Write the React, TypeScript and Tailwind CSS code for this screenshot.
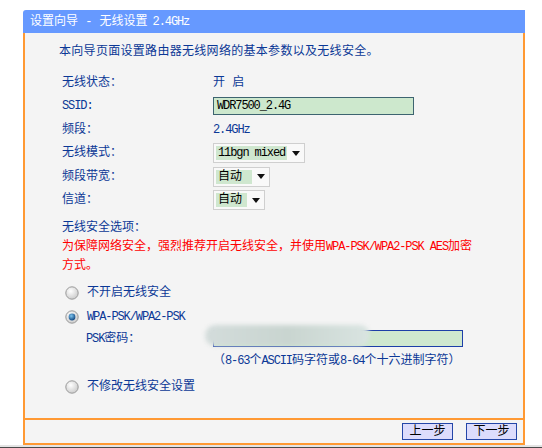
import React from "react";

const FONT = { fontFamily: '"Liberation Mono", "Noto Sans CJK SC", monospace' };

// latin runs: SimSun-like half-width, ~6px per glyph
function L({ children }: { children: React.ReactNode }) {
  return <span className="font-['Liberation_Mono'] text-[12px] tracking-[-1.1px]">{children}</span>;
}

function Radio({ checked }: { checked?: boolean }) {
  return (
    <svg width="14" height="14" viewBox="0 0 14 14" className="shrink-0">
      <defs>
        <radialGradient id="rg" cx="40%" cy="35%" r="70%">
          <stop offset="0%" stopColor="#ffffff" />
          <stop offset="100%" stopColor="#c9c9c9" />
        </radialGradient>
        <radialGradient id="rb" cx="40%" cy="35%" r="70%">
          <stop offset="0%" stopColor="#7fc6f0" />
          <stop offset="100%" stopColor="#0b3f7a" />
        </radialGradient>
      </defs>
      <circle cx="7" cy="7" r="6.2" fill="url(#rg)" stroke="#9a9a9a" strokeWidth="1" />
      {checked && <circle cx="7" cy="7" r="3.4" fill="url(#rb)" />}
    </svg>
  );
}

function Select({ text, width, hl }: { text: React.ReactNode; width: number; hl: number }) {
  return (
    <div
      className="flex h-[20px] items-center border border-[#cfcfcf] bg-[#f9f9f9] pl-[2px] text-black"
      style={{ width }}
    >
      <div className="flex h-[14px] items-center bg-[#cfe7cf] pl-[2px]" style={{ width: hl }}>
        {text}
      </div>
      <div className="flex flex-1 justify-center">
        <svg width="8" height="5" viewBox="0 0 8 5">
          <path d="M0 0 H8 L4 5 Z" fill="#111" />
        </svg>
      </div>
    </div>
  );
}

const rows: { label: React.ReactNode; value: React.ReactNode }[] = [
  { label: "无线状态：", value: <span>开 启</span> },
  {
    label: <L>SSID:</L>,
    value: (
      <div className="flex h-[18px] w-[201px] items-center border border-[#3d6470] bg-[#cde8cd] pl-[3px] text-black">
        <L>WDR7500_2.4G</L>
      </div>
    ),
  },
  { label: "频段：", value: <L>2.4GHz</L> },
  { label: "无线模式：", value: <Select text={<L>11bgn mixed</L>} width={92} hl={71} /> },
  { label: "频段带宽：", value: <Select text="自动" width={57} hl={36} /> },
  { label: "信道：", value: <Select text="自动" width={52} hl={31} /> },
];

export default function App() {
  return (
    <div className="h-[448px] w-[542px] overflow-hidden bg-white text-[12px] text-[#0b3896]" style={FONT}>
      <div className="ml-[23px] w-[502px] pt-[10px]">
        <div className="flex h-[23px] items-center rounded-tl-[3px] bg-[#6699ff] pl-[7px] text-white">
          设置向导 - 无线设置 <span className="ml-[5px]"><L>2.4GHz</L></span>
        </div>

        <div className="relative h-[385px] border-x-2 border-[#ff9933] bg-[#f4f4f4]">
          <div className="pl-[34px] pt-[11px] leading-[16px] tracking-[0.3px]">
            本向导页面设置路由器无线网络的基本参数以及无线安全。
          </div>

          <div className="mt-[11px] pl-[37px]">
            {rows.map((r, i) => (
              <div key={i} className="flex h-[23.5px] items-center">
                <div className="w-[151px]">{r.label}</div>
                {r.value}
              </div>
            ))}
          </div>

          <div className="mt-[7px] pl-[37px] leading-[19px]">
            <div>无线安全选项：</div>
            <div className="whitespace-nowrap text-[#ff0000]">
              为保障网络安全，强烈推荐开启无线安全，并使用<L>WPA-PSK/WPA2-PSK AES</L>加密
              <br />
              方式。
            </div>
          </div>

          <div className="mt-[5px] pl-[40px]">
            <div className="flex h-[24px] items-center gap-[8px]">
              <Radio />
              <span>不开启无线安全</span>
            </div>
            <div className="flex h-[24px] items-center gap-[8px]">
              <Radio checked />
              <L>WPA-PSK/WPA2-PSK</L>
            </div>
          </div>

          <div className="flex h-[19px] items-center pl-[61px]">
            <div className="w-[127px]">
              <L>PSK</L>密码：
            </div>
            <div className="h-[17px] w-[250px] border-[1.5px] border-[#1d3fa8] bg-[#cfe8cf]" />
          </div>

          <div className="flex h-[26px] items-center pl-[188px]">
            （<L>8-63</L>个<L>ASCII</L>码字符或<L>8-64</L>个十六进制字符）
          </div>

          <div className="flex h-[26px] items-center gap-[8px] pl-[40px]">
            <Radio />
            <span>不修改无线安全设置</span>
          </div>

          {/* privacy blur over the PSK value */}
          <div className="absolute left-[180px] top-[292px] h-[21px] w-[165px] rounded-full bg-gradient-to-r from-[#d3dcdb] via-[#c9d5d0] to-[#d9e4e1] blur-[2px]" />
        </div>

        <div className="flex h-[27px] items-center justify-end gap-[13px] border-2 border-[#ff9933] bg-[#f4f4f4] pr-[6px]">
          <button className="flex h-[17px] w-[51px] items-center justify-center border-[1.5px] border-[#2446a8] bg-[#dcdcfc] text-black">
            上一步
          </button>
          <button className="flex h-[17px] w-[51px] items-center justify-center border-[1.5px] border-[#2446a8] bg-[#dcdcfc] text-black">
            下一步
          </button>
        </div>
      </div>
      <div className="h-[2px] bg-[#e4e4e4]" />
      <div className="h-[2px] bg-[#4a4a4a]" />
    </div>
  );
}
